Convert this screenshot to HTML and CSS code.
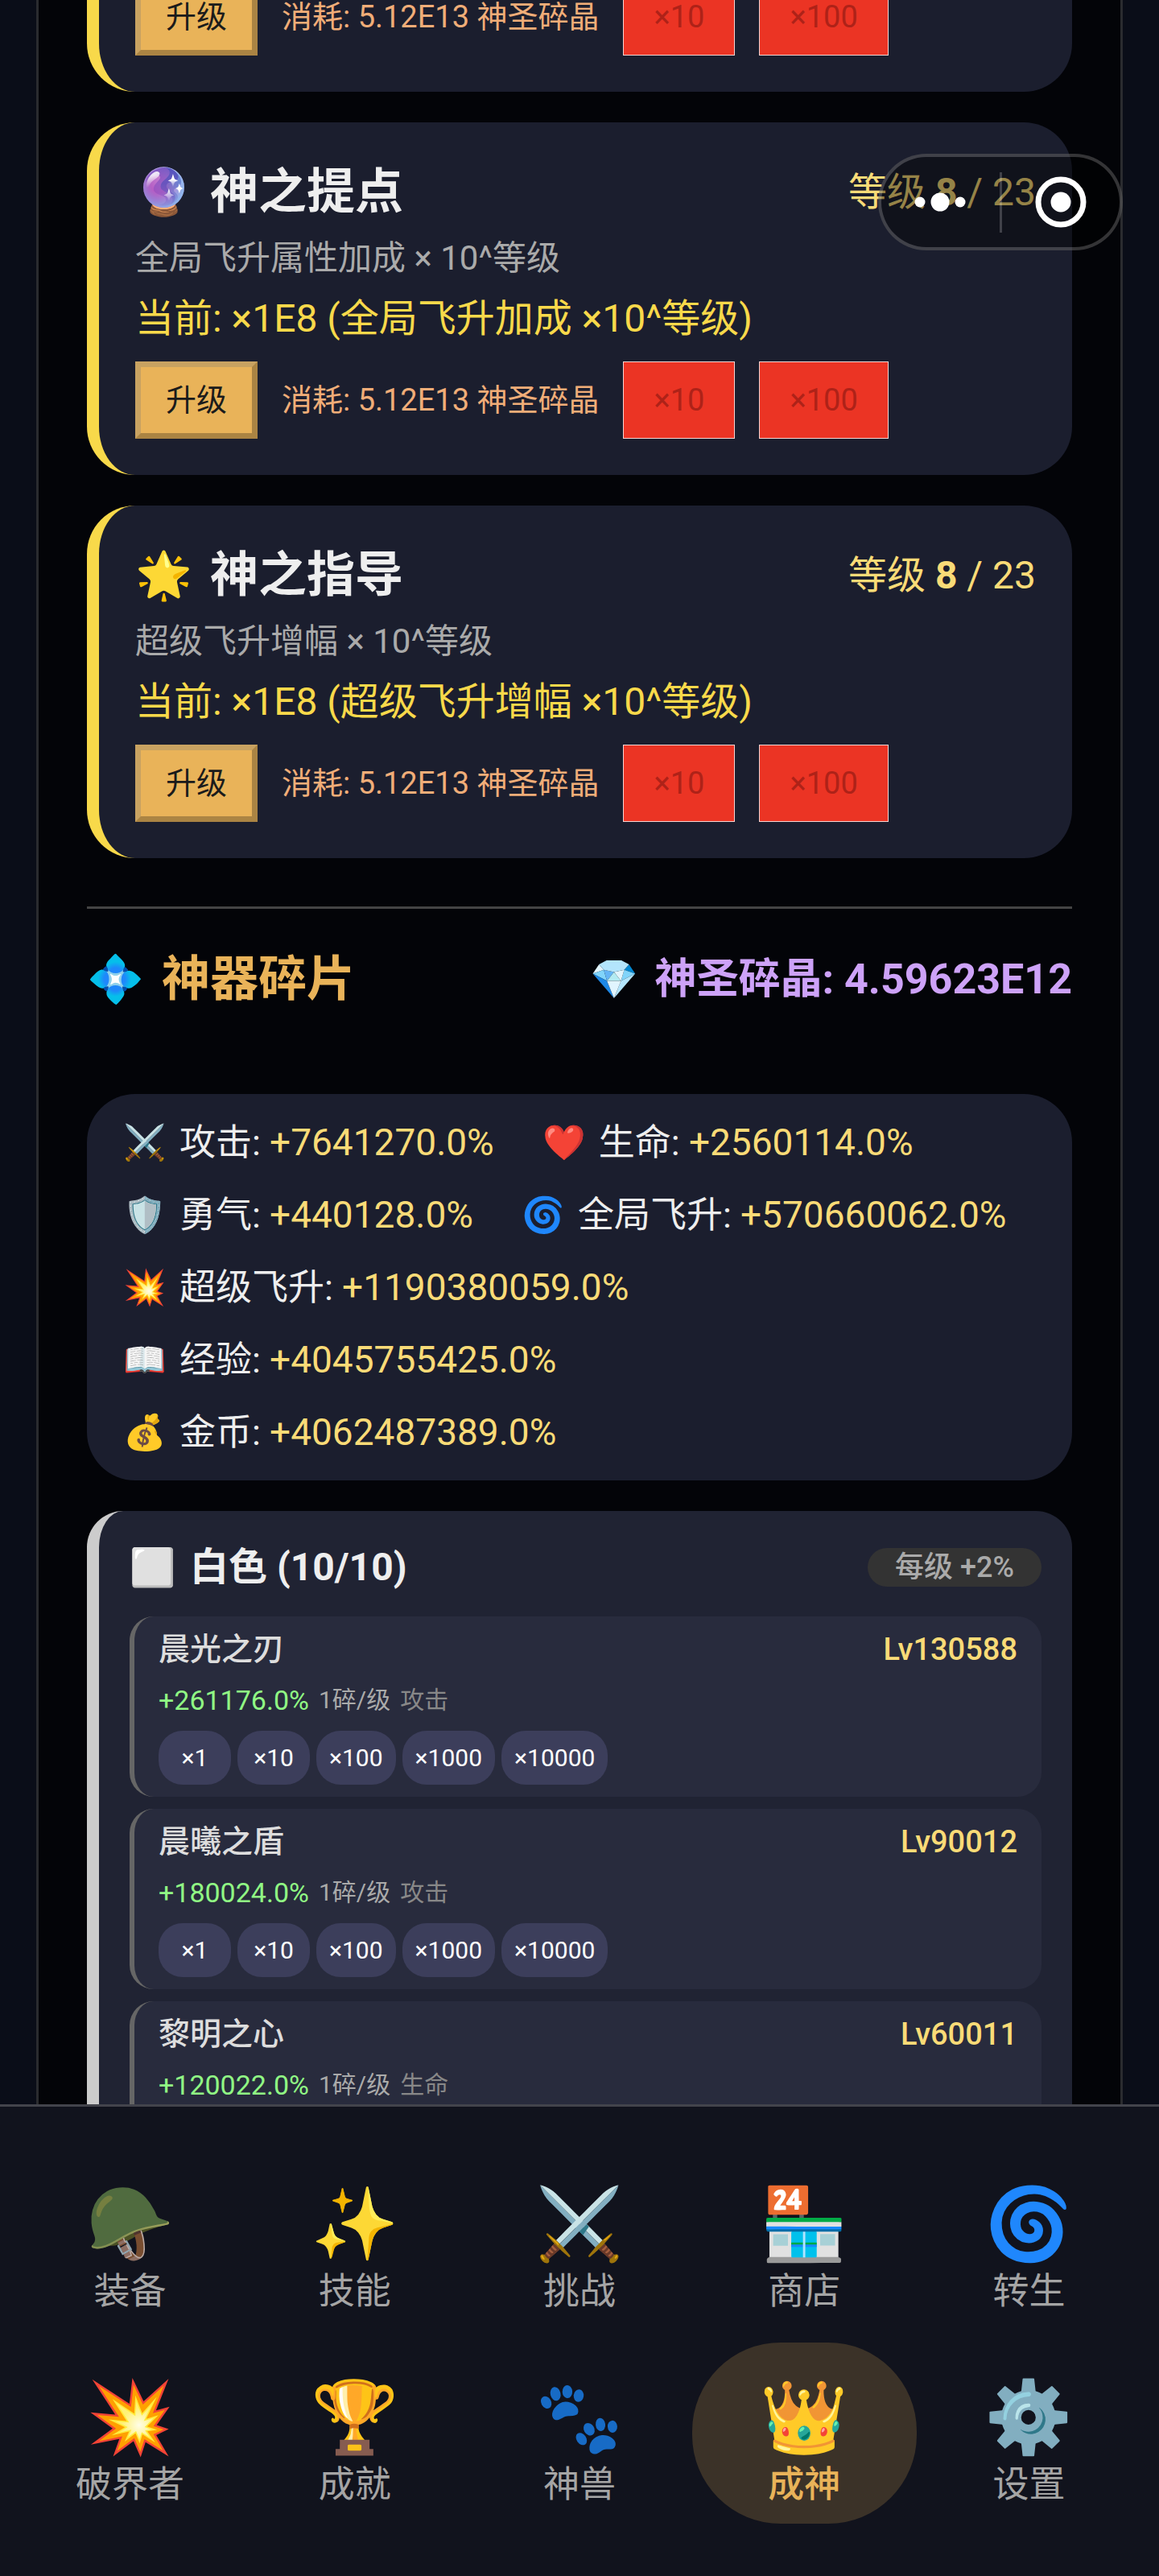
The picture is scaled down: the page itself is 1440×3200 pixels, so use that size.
FILE: index.html
```
<!DOCTYPE html>
<html lang="zh-CN">
<head>
<meta charset="utf-8">
<meta name="viewport" content="width=device-width, initial-scale=1">
<title>成神</title>
<link rel="stylesheet" href="styles.css">
</head>
<body>
<div class="app">
  <main class="view">
    <div class="panel">
      <section class="blessing blessing--scrolled">
        <div class="upgrade">
          <button class="btn-upgrade" type="button">升级</button>
          <span class="cost">消耗: 5.12E13 神圣碎晶</span>
          <button class="btn-bulk" type="button" disabled>×10</button>
          <button class="btn-bulk" type="button" disabled>×100</button>
        </div>
      </section>

      <section class="blessing">
        <div class="blessing-head">
          <h2 class="blessing-name"><span class="emoji">🔮</span>神之提点</h2>
          <span class="level">等级 <b>8</b> / 23</span>
        </div>
        <p class="blessing-desc">全局飞升属性加成 × 10^等级</p>
        <p class="blessing-now">当前: ×1E8 (全局飞升加成 ×10^等级)</p>
        <div class="upgrade">
          <button class="btn-upgrade" type="button">升级</button>
          <span class="cost">消耗: 5.12E13 神圣碎晶</span>
          <button class="btn-bulk" type="button" disabled>×10</button>
          <button class="btn-bulk" type="button" disabled>×100</button>
        </div>
      </section>

      <section class="blessing">
        <div class="blessing-head">
          <h2 class="blessing-name"><span class="emoji">🌟</span>神之指导</h2>
          <span class="level">等级 <b>8</b> / 23</span>
        </div>
        <p class="blessing-desc">超级飞升增幅 × 10^等级</p>
        <p class="blessing-now">当前: ×1E8 (超级飞升增幅 ×10^等级)</p>
        <div class="upgrade">
          <button class="btn-upgrade" type="button">升级</button>
          <span class="cost">消耗: 5.12E13 神圣碎晶</span>
          <button class="btn-bulk" type="button" disabled>×10</button>
          <button class="btn-bulk" type="button" disabled>×100</button>
        </div>
      </section>

      <header class="shards-head">
        <h2 class="shards-title"><span class="emoji">💠</span>神器碎片</h2>
        <div class="crystals"><span class="emoji">💎</span>神圣碎晶: 4.59623E12</div>
      </header>

      <ul class="totals">
        <li class="total"><span class="emoji">⚔️</span><span>攻击: <span class="value">+7641270.0%</span></span></li>
        <li class="total"><span class="emoji">❤️</span><span>生命: <span class="value">+2560114.0%</span></span></li>
        <li class="total"><span class="emoji">🛡️</span><span>勇气: <span class="value">+440128.0%</span></span></li>
        <li class="total"><span class="emoji">🌀</span><span>全局飞升: <span class="value">+570660062.0%</span></span></li>
        <li class="total"><span class="emoji">💥</span><span>超级飞升: <span class="value">+1190380059.0%</span></span></li>
        <li class="total"><span class="emoji">📖</span><span>经验: <span class="value">+4045755425.0%</span></span></li>
        <li class="total"><span class="emoji">💰</span><span>金币: <span class="value">+4062487389.0%</span></span></li>
      </ul>

      <section class="tier">
        <div class="tier-head">
          <h3 class="tier-name"><span class="emoji">⬜</span>白色 (10/10)</h3>
          <span class="tier-rate">每级 +2%</span>
        </div>

        <article class="shard">
          <div class="shard-head"><h4 class="shard-name">晨光之刃</h4><span class="shard-level">Lv130588</span></div>
          <p class="shard-info"><span class="bonus">+261176.0%</span><span class="price">1碎/级</span><span class="kind">攻击</span></p>
          <div class="shard-actions">
            <button class="pill" type="button">×1</button>
            <button class="pill" type="button">×10</button>
            <button class="pill" type="button">×100</button>
            <button class="pill" type="button">×1000</button>
            <button class="pill" type="button">×10000</button>
          </div>
        </article>

        <article class="shard">
          <div class="shard-head"><h4 class="shard-name">晨曦之盾</h4><span class="shard-level">Lv90012</span></div>
          <p class="shard-info"><span class="bonus">+180024.0%</span><span class="price">1碎/级</span><span class="kind">攻击</span></p>
          <div class="shard-actions">
            <button class="pill" type="button">×1</button>
            <button class="pill" type="button">×10</button>
            <button class="pill" type="button">×100</button>
            <button class="pill" type="button">×1000</button>
            <button class="pill" type="button">×10000</button>
          </div>
        </article>

        <article class="shard shard--partial">
          <div class="shard-head"><h4 class="shard-name">黎明之心</h4><span class="shard-level">Lv60011</span></div>
          <p class="shard-info"><span class="bonus">+120022.0%</span><span class="price">1碎/级</span><span class="kind">生命</span></p>
        </article>
      </section>
    </div>
  </main>

  <nav class="tabs">
    <a class="tab" href="#equip"><span class="emoji">🪖</span>装备</a>
    <a class="tab" href="#skill"><span class="emoji">✨</span>技能</a>
    <a class="tab" href="#battle"><span class="emoji">⚔️</span>挑战</a>
    <a class="tab" href="#shop"><span class="emoji">🏪</span>商店</a>
    <a class="tab" href="#rebirth"><span class="emoji">🌀</span>转生</a>
    <a class="tab" href="#breaker"><span class="emoji">💥</span>破界者</a>
    <a class="tab" href="#achievement"><span class="emoji">🏆</span>成就</a>
    <a class="tab" href="#beast"><span class="emoji">🐾</span>神兽</a>
    <a class="tab tab--active" href="#god" aria-current="page"><span class="emoji">👑</span>成神</a>
    <a class="tab" href="#settings"><span class="emoji">⚙️</span>设置</a>
  </nav>
</div>

<div class="capsule">
  <button class="capsule-btn" type="button" aria-label="更多">
    <svg width="64" height="24" viewBox="0 0 64 24" fill="#fff" aria-hidden="true"><circle cx="7" cy="12" r="6.5"/><circle cx="32" cy="12" r="11.5"/><circle cx="57" cy="12" r="6.5"/></svg>
  </button>
  <span class="capsule-divider"></span>
  <button class="capsule-btn" type="button" aria-label="关闭">
    <svg width="64" height="64" viewBox="0 0 64 64" aria-hidden="true"><circle cx="32" cy="32" r="28" fill="none" stroke="#fff" stroke-width="7"/><circle cx="32" cy="32" r="12.5" fill="#fff"/></svg>
  </button>
</div>
</body>
</html>
```

FILE: styles.css
```
* {
  box-sizing: border-box;
}

body {
  margin: 0;
  background: #0a0d18;
  color: #eee;
  font-family: Roboto, "Noto Sans CJK SC", sans-serif;
  font-size: 45px;
}

h2, h3, h4, p, ul {
  margin: 0;
  padding: 0;
}

h2, h3 {
  font-weight: 700;
}

button {
  margin: 0;
  font-family: inherit;
}

.app {
  display: flex;
  flex-direction: column;
  height: 100vh;
}

.view {
  display: flex;
  flex: 1;
  min-height: 0;
  padding: 0 45px;
  overflow: hidden;
}

.panel {
  display: flow-root;
  flex: 1;
  padding: 0 60px;
  background: #030408;
  border: solid #2a2b2f;
  border-width: 0 3px;
}

/* Blessing cards */
.blessing {
  margin-bottom: 38px;
  padding: 45px;
  background: #1b1e2e;
  border-left: 15px solid #f8d94a;
  border-radius: 60px;
}

.blessing--scrolled {
  margin-top: -72px;
}

.blessing-head {
  display: flex;
  align-items: center;
  justify-content: space-between;
  line-height: 84px;
}

.blessing-name {
  display: flex;
  gap: 22px;
  font-size: 60px;
}

.blessing-name .emoji,
.shards-title .emoji {
  font-size: 57px;
  font-weight: 400;
}

.level {
  color: #f9db77;
  font-size: 48px;
}

.blessing-desc {
  margin-top: 10px;
  color: #aaa;
  font-size: 42px;
  line-height: 60px;
}

.blessing-now {
  margin-top: 15px;
  color: #f8d94a;
  font-size: 48px;
  line-height: 60px;
}

.upgrade {
  display: flex;
  align-items: center;
  gap: 30px;
  margin-top: 23px;
  font-size: 38px;
  line-height: 40px;
}

.blessing--scrolled .upgrade {
  margin-top: 0;
}

.btn-upgrade {
  width: 152px;
  height: 96px;
  padding: 0;
  background: #e9b359;
  border: 7px solid;
  border-color: #c8a261 #ab8443 #ab8443 #c8a261;
  color: #1b1b1b;
  font-size: 38px;
  line-height: 40px;
}

.cost {
  color: #f0ad78;
}

.btn-bulk {
  height: 96px;
  padding: 0 37px;
  background: #eb3424;
  border: 1px solid #f6d5d2;
  color: #ae2218;
  font-size: 38px;
  line-height: 40px;
}

/* Shard heading */
.shards-head {
  display: flex;
  align-items: center;
  justify-content: space-between;
  margin: 60px 0 102px;
  padding-top: 48px;
  border-top: 3px solid #444;
  line-height: 80px;
}

.shards-title {
  display: flex;
  gap: 22px;
  color: #e9b359;
  font-size: 60px;
}

.crystals {
  display: flex;
  gap: 20px;
  color: #cda2f8;
  font-size: 52px;
  font-weight: 700;
}

.crystals .emoji {
  font-size: 48px;
}

/* Total bonuses */
.totals {
  display: flex;
  flex-wrap: wrap;
  gap: 30px 60px;
  margin-bottom: 38px;
  padding: 30px 60px 30px 45px;
  background: #1b1e2e;
  border-radius: 60px;
  line-height: 60px;
  list-style: none;
}

.total {
  display: flex;
  gap: 16px;
  height: 60px;
}

.total .emoji {
  font-size: 43px;
}

.value {
  color: #f9db77;
  font-size: 46px;
}

/* Shard tier */
.tier {
  padding: 38px;
  background: #202333;
  border-left: 15px solid #ccc;
  border-radius: 45px;
}

.tier-head {
  display: flex;
  align-items: center;
  justify-content: space-between;
  margin-bottom: 29px;
  line-height: 64px;
}

.tier-name {
  display: flex;
  gap: 18px;
  font-size: 48px;
}

.tier-name .emoji {
  font-size: 46px;
}

.tier-rate {
  padding: 0 34px;
  background: #333;
  border-radius: 24px;
  color: #aaa;
  font-size: 36px;
  font-weight: 500;
  line-height: 48px;
}

.shard {
  margin-bottom: 15px;
  padding: 15px 30px;
  background: #282b3d;
  border-left: 6px solid #666;
  border-radius: 30px;
}

/* The last visible row runs on below the navigation bar */
.shard--partial {
  min-height: 224px;
}

.shard-head {
  display: flex;
  justify-content: space-between;
  line-height: 52px;
}

.shard-name {
  color: #ddd;
  font-size: 39px;
  font-weight: 500;
}

.shard-level {
  color: #f9db77;
  font-size: 38px;
  font-weight: 500;
}

.shard-info {
  display: flex;
  gap: 12px;
  margin-top: 14px;
  font-size: 30px;
  line-height: 46px;
}

.bonus {
  color: #90f884;
  font-size: 34px;
}

.price {
  color: #aaa;
}

.kind {
  color: #888;
}

.shard-actions {
  display: flex;
  gap: 8px;
  margin-top: 15px;
}

.pill {
  min-width: 90px;
  height: 67px;
  padding: 0 16px;
  background: #3c3e5b;
  border: 0;
  border-radius: 30px;
  color: #fff;
  font-size: 30px;
}

/* Bottom navigation */
.tabs {
  display: grid;
  grid-template-columns: repeat(5, 1fr);
  gap: 15px 0;
  padding: 53px 22px 65px;
  background: #11131d;
  border-top: 3px solid #43444c;
}

.tab {
  display: flex;
  flex-direction: column;
  align-items: center;
  height: 225px;
  padding-top: 39px;
  border-radius: 110px;
  color: #a5a5a5;
  line-height: 60px;
  text-decoration: none;
}

.tab .emoji {
  font-size: 88px;
  line-height: 108px;
}

.tab--active {
  background: #3b3228;
  color: #e9b359;
  font-weight: 500;
}

/* Mini-program capsule, floats over the page */
.capsule {
  position: fixed;
  top: 191px;
  right: 45px;
  display: flex;
  align-items: center;
  width: 304px;
  height: 120px;
  background: rgba(0, 0, 0, 0.4);
  border: 4px solid rgba(255, 255, 255, 0.2);
  border-radius: 60px;
}

.capsule-btn {
  display: flex;
  flex: 1;
  align-items: center;
  justify-content: center;
  height: 100%;
  padding: 0;
  background: none;
  border: 0;
}

.capsule-divider {
  width: 3px;
  height: 75px;
  background: rgba(255, 255, 255, 0.2);
}
```
